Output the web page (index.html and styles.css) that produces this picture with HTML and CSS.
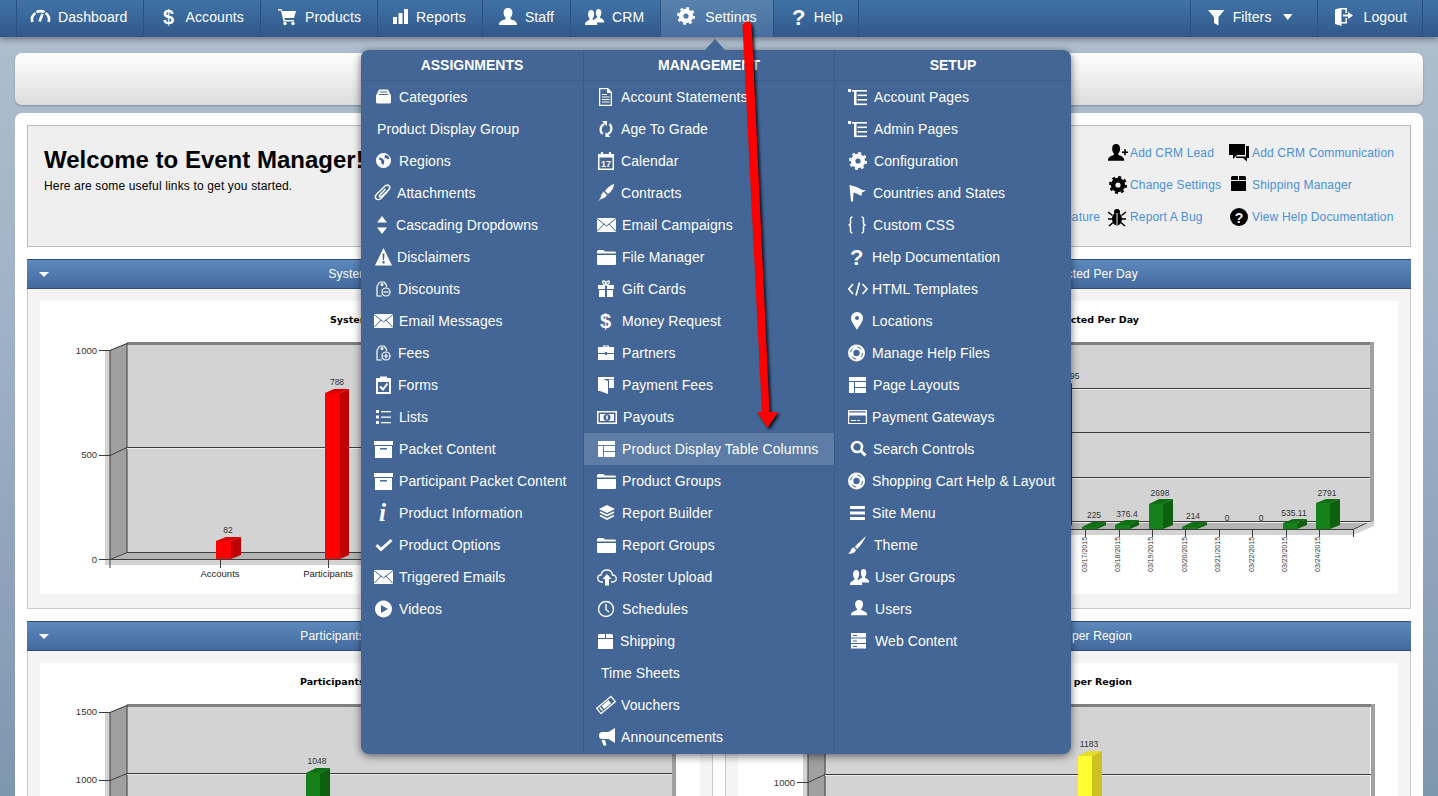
FILE: index.html
```html
<!DOCTYPE html>
<html lang="en">
<head>
<meta charset="utf-8">
<title>Event Manager</title>
<link rel="stylesheet" href="styles.css">
</head>
<body>
<svg class="sprite" width="0" height="0" aria-hidden="true"><defs>
<g id="gauge" fill="none" stroke="currentColor" stroke-width="2.6"><path d="M1.3 14A8.2 8.2 0 0 1 4.500 5M5.500 4.200A8.2 8.2 0 0 1 13.500 4.200M14.500 5A8.2 8.2 0 0 1 17.7 14"/><path d="M8.500 13.500 11.500 6"/></g>
<text id="dollar" class="gb" y="16">$</text>
<text id="qmark" class="gq" y="16.500">?</text>
<path id="cart" d="M0 1h3.500l.6 2H18l-2 7H6.400l.5 2H16v1.500H5.500L3 2.500H0z"/>
<g id="cartw"><use href="#cart"/><circle cx="7" cy="15.500" r="1.700"/><circle cx="15" cy="15.500" r="1.700"/></g>
<g id="bars"><rect y="9" width="4" height="7"/><rect x="5.500" y="5" width="4" height="11"/><rect x="11" y="1" width="4" height="15"/></g>
<path id="person" d="M9 0c3 0 4.400 2 4.400 4.800 0 2-.8 4-2 5V11c1 .8 6.600 1.800 6.600 5v1H0v-1c0-3.200 5.600-4.200 6.600-5V9.800c-1.200-1-2-3-2-5C4.600 2 6 0 9 0z"/>
<g id="users"><use href="#person" transform="translate(8 1) scale(.62 .8)"/><use href="#person" transform="translate(0 2) scale(.68 .88)"/></g>
<g id="gear" fill="none" stroke="currentColor"><circle cx="9" cy="9" r="4.900" stroke-width="4.600"/><circle cx="9" cy="9" r="7.900" stroke-width="2.200" stroke-dasharray="3 3.200"/></g>
<path id="filter" d="M0 2h16.500L10.500 9v8.500L6 15V9z"/>
<path id="caret" d="M0 6h9.500L4.750 12z"/>
<g id="logout"><path d="M0 1.500 5 0h7v5h-1.500V1.500h-4V14h4v-4H12v5.500H6.500V18L0 16z"/><path d="M8 6.500h5V4l5 3.500-5 3.500V8.500H8z"/></g>
<path id="tray" fill-rule="evenodd" d="M3 1.500h9l3 6v7l-1 1H1l-1-1v-7zM3.800 3.500v1h7.400v-1zM3 6v1h9V6z"/>
<path id="globe" fill-rule="evenodd" d="M7.500 1.500a7.500 7.500 0 1 0 .01 0zM9 3.500l3 .5 1.500 3-2 1-1-1.500-2 .5zM3 6l3.500 1 2 2.500-1 4-2-1.500-.5-3L3 8z"/>
<path id="clip" fill="none" stroke="currentColor" stroke-width="1.400" d="M13 7 6 14.500c-1.500 1.500-4 1.500-5 .3s-.8-3 .6-4.500L10 2c1.200-1.200 3-1.200 4-.2s1 2.700-.2 4L6.500 12.500c-.8.8-1.800.6-2 .2s-.2-1 .4-1.700L10.500 5"/>
<path id="updown" d="M5 0l5 6.500H0zM0 11.500h10L5 18z"/>
<path id="warn" fill-rule="evenodd" d="M8.500 0 17 17.500H0zM7.500 5.500l.4 6.500h1.200l.4-6.500zM7.500 13v2.500h2V13z"/>
<g id="bagminus" fill="none" stroke="currentColor" stroke-width="1.200"><path d="M5 2h4l2.500 3v2M4.500 2 2 6.500V16h5"/><circle cx="7" cy="4.500" r=".9"/><circle cx="11" cy="12" r="4"/><path d="M8.500 12h5"/></g>
<g id="bagplus" fill="none" stroke="currentColor" stroke-width="1.200"><path d="M5 2h4l2.500 3v2M4.500 2 2 6.500V16h5"/><circle cx="7" cy="4.500" r=".9"/><circle cx="11" cy="12" r="4"/><path d="M8.500 12h5M11 9.500v5"/></g>
<g id="mail"><rect y="2" width="19" height="14"/><path fill="none" stroke="#436696" d="M0 2.500 9.500 10 19 2.500M0 15.500 7 8M19 15.500 12 8"/></g>
<g id="clipb"><path fill-rule="evenodd" d="M0 2h4V.5h7V2h4v16H0zM2 6v10h11V6z"/><path fill="none" stroke="currentColor" stroke-width="2" d="M4 10.500l3 3 4.500-6"/></g>
<g id="lists"><rect y="2" width="3" height="3"/><rect y="7.500" width="3" height="3"/><rect y="13" width="3" height="3"/><rect x="5" y="3" width="10" height="1.300"/><rect x="5" y="8.500" width="10" height="1.300"/><rect x="5" y="14" width="10" height="1.300"/></g>
<path id="archive" fill-rule="evenodd" d="M0 1h19v4H0zM1 6h17v12H1zM6 8v1.500h7V8z"/>
<text id="info" class="gi" y="17">i</text>
<path id="check" fill="none" stroke="currentColor" stroke-width="3" d="M1.500 9l4.500 4.500L16.500 4"/>
<path id="play" fill-rule="evenodd" d="M8.500.5a8.500 8.500 0 1 0 .01 0zM6 5v8l7-4z"/>
<path id="doc" fill-rule="evenodd" d="M1 0h9l4 4v14H1zM2.300 1.300v15.400h10.400V5H9V1.300zM4 6h5v1H4zM4 8.500h7.500v1H4zM4 11h7.500v1H4zM4 13.500h7.500v1H4z"/>
<g id="sync"><path fill="none" stroke="currentColor" stroke-width="2.200" d="M5.500 4C1 5.500.5 11 3.500 14M8.500 14C13 12.500 13.500 7 10.500 4"/><path d="M3 1h5v5zM11.500 17h-5v-5z"/></g>
<g id="cal"><path fill-rule="evenodd" d="M0 2h3V0h2v2h6V0h2v2h3v16H0zM1.500 5.500v11h13v-11z"/><text class="gs" x="3" y="15">17</text></g>
<g id="pen"><path d="M16 0c0 4-3 8-6 10L7 7c2-3 6-6 9-7z"/><path d="M5.500 7.500 9 11l-2 2.500-4 1.500-3 2.500L2.500 14l1-3.500z"/></g>
<path id="folder" d="M0 3.500Q0 2 1.500 2h5L8 3.500h10Q19 3.500 19 5v.5H0zM0 7h19v9q0 1-1 1H1q-1 0-1-1z"/>
<g id="gift"><path d="M0 5h7v4H0zM9 5h7v4H9zM1 10h6v7H1zM9 10h6v7H9z"/><path fill="none" stroke="currentColor" stroke-width="1.300" d="M8 5C5 5 3.500 1 5.500 1 7 1 8 3 8 5c0-2 1-4 2.500-4C12.500 1 11 5 8 5"/></g>
<path id="brief" fill-rule="evenodd" d="M5 3V1.500h6V3h5v6H9V8H7v1H0V3zM6.500 3h3v-.5h-3zM0 10h7v1h2v-1h7v6H0z"/>
<path id="wallet" d="M0 1h16v2H6v.5L10 5v13L2 15H0zM11 3.500h5V12h-5z"/>
<g id="cash"><path fill-rule="evenodd" d="M0 3h20v13H0zM1.500 4.500v10h17v-10z"/><rect x="3" y="6" width="14" height="7"/><circle cx="10" cy="9.500" r="3.500" fill="#436696"/><rect x="9.200" y="7.500" width="1.600" height="4"/></g>
<g id="table"><rect y="1" width="17" height="4"/><rect y="6" width="5" height="11"/><rect x="6" y="6" width="11" height="5"/><rect x="6" y="12" width="11" height="5"/></g>
<g id="layers"><path d="M8 1l8 4-8 4-8-4z"/><path fill="none" stroke="currentColor" stroke-width="1.600" d="M1 8l7 3.500L15 8M1 11.500 8 15l7-3.500"/></g>
<g id="cloud"><path fill="none" stroke="currentColor" stroke-width="1.300" d="M6 14H4.500C2 14 .7 12 .7 10.300.7 8.500 2 7 4 7c.5-3 3-5 6-5 3 0 5 2 5.500 5 2 0 3.800 1.500 3.800 3.600S18 14 15.500 14H14"/><path d="M10 6l4.500 5H12v6.500H8V11H5.500z"/></g>
<g id="clock" fill="none" stroke="currentColor" stroke-width="1.400"><circle cx="8" cy="9" r="7.500"/><path d="M8 4v5.500l3 2.500"/></g>
<path id="box" d="M0 3.500Q0 2 1.500 2H7v4H0zM8 2h5.500Q15 2 15 3.500V6H8zM0 7h15v10H0z"/>
<g id="voucher" transform="rotate(-40 9 9)"><path fill-rule="evenodd" d="M-1 5h20v8H-1zM.3 6.300v5.400h17.400V6.300z"/><path d="M5 7h9v4H5z"/><path d="M2 7h1.500v4H2z"/></g>
<path id="mega" d="M18 0v15l-6.500-4H5.500A3.500 3.500 0 0 1 2 7.500 3.500 3.500 0 0 1 5.500 4h6zM4.500 12h3.500l1.500 5.500h-3z"/>
<g id="elist"><rect y="1" width="3" height="3"/><rect x="4" y="2" width="15" height="1.600"/><rect x="6" y="2" width="2.500" height="15"/><rect x="6" y="15.500" width="13" height="1.600"/><rect x="9.500" y="6.500" width="9.500" height="1.600"/><rect x="9.500" y="11" width="9.500" height="1.600"/></g>
<path id="flag" d="M.5 1l7 2 6 3 3.500.5-4 2-.5 3.500-5-2.500-3-1L4 17.500H2z"/>
<path id="braces" fill="none" stroke="currentColor" stroke-width="1.500" d="M4.500 1C2.500 1 2.500 2 2.500 4v3c0 1-1 2-2 2 1 0 2 1 2 2v3c0 2 0 3 2 3M13.500 1c2 0 2 1 2 3v3c0 1 1 2 2 2-1 0-2 1-2 2v3c0 2 0 3-2 3"/>
<path id="code" fill="none" stroke="currentColor" stroke-width="1.600" d="M5 4 .8 9 5 14M14.500 4 19 9l-4.500 5M11.500 2.500 8 15.500"/>
<path id="pin" fill-rule="evenodd" d="M6 0a6 6 0 0 1 6 6c0 4-4 8-6 12C4 14 0 10 0 6a6 6 0 0 1 6-6zM6 4a2 2 0 1 0 .01 0z"/>
<g id="buoy"><circle cx="8.500" cy="9" r="8.500"/><circle cx="8.500" cy="9" r="3.200" fill="#436696"/><circle cx="8.500" cy="9" r="6" fill="none" stroke="#436696" stroke-width="1" stroke-dasharray="4.500 5"/></g>
<g id="card"><path fill-rule="evenodd" d="M0 2h19v14H0zM1.200 7.500V15h16.600V7.500zM1.200 3.200v1.400h16.600V3.200z"/><rect x="3" y="12" width="5" height="1"/><rect x="9" y="12" width="3" height="1"/></g>
<g id="search" fill="none" stroke="currentColor"><circle cx="7" cy="7" r="5" stroke-width="2.600"/><path stroke-width="3" d="M10.500 10.500l5 5"/></g>
<g id="menu"><rect y="2" width="15" height="3"/><rect y="7.500" width="15" height="3"/><rect y="13" width="15" height="3"/></g>
<g id="brush"><path d="M18 0c-4 4-9 8-11 11l2 2c3-3 7-8 9-13z"/><path d="M6 11.500c-2 0-3 2-3.500 3.500-.2.8-1.500 2-2.500 2.500 3 .5 7 0 8-3.500z"/></g>
<g id="server"><rect y="1" width="15" height="4.500"/><rect y="6.500" width="15" height="4.500"/><rect y="12" width="15" height="4.500"/><path fill="#436696" d="M2 3h4v1H2zM2 8.500h4v1H2zM2 14h4v1H2z"/></g>
<g id="personadd"><use href="#person" transform="scale(.9 .98)"/><path d="M14 7.500h2.200V5.300h1.600v2.200H20v1.600h-2.200v2.200h-1.600V9.100H14z"/></g>
<g id="bubbles"><path d="M0 0h16v11H8l-4 4v-4H0z"/><path d="M17 2h3v12h-2v3.500L14 14H7v-1.500h10z"/></g>
<g id="bug"><ellipse cx="9" cy="11" rx="5" ry="6.500"/><circle cx="9" cy="4" r="3"/><path fill="none" stroke="currentColor" stroke-width="1.500" d="M0 4l4.500 3.500M18 4l-4.500 3.500M0 11h5M18 11h-5M1 18l4-3.500M17 18l-4-3.500"/><path stroke="#efefef" d="M9 5v12"/></g>
<g id="helpc"><circle cx="9" cy="9" r="9"/><text class="gh" x="9" y="14.500">?</text></g>
</defs></svg>

<nav class="nav">
  <a class="nav-item" href="#"><svg class="ico" width="27" height="18"><use href="#gauge"/></svg>Dashboard</a>
  <a class="nav-item" href="#"><svg class="ico" width="27" height="18"><use href="#dollar" x="5"/></svg>Accounts</a>
  <a class="nav-item" href="#"><svg class="ico" width="30" height="18"><use href="#cartw" x="3"/></svg>Products</a>
  <a class="nav-item" href="#"><svg class="ico" width="24" height="18"><use href="#bars" x="1"/></svg>Reports</a>
  <a class="nav-item" href="#"><svg class="ico" width="28" height="18"><use href="#person" x="2"/></svg>Staff</a>
  <a class="nav-item" href="#"><svg class="ico" width="27" height="18"><use href="#users"/></svg>CRM</a>
  <a class="nav-item is-active" href="#"><svg class="ico" width="30" height="18"><use href="#gear" x="2" y="-1"/></svg>Settings</a>
  <a class="nav-item is-last" href="#"><svg class="ico" width="26" height="18"><use href="#qmark" x="4"/></svg>Help</a>
  <div class="nav-right">
    <a class="nav-item" href="#"><svg class="ico" width="28" height="18"><use href="#filter" x="3"/></svg>Filters<svg class="ico" width="29" height="18"><use href="#caret" x="11"/></svg></a>
    <a class="nav-item is-last" href="#"><svg class="ico" width="32" height="18"><use href="#logout" x="3"/></svg>Logout</a>
  </div>
</nav>

<div class="toolbar"></div>

<main class="main">
  <section class="welcome">
    <div class="welcome-text">
      <h1>Welcome to Event Manager!</h1>
      <p>Here are some useful links to get you started.</p>
    </div>
    <div class="quick">
      <span></span>
      <a href="#"><svg class="ico dark" width="22" height="18"><use href="#personadd"/></svg>Add CRM Lead</a>
      <a href="#"><svg class="ico dark" width="23" height="18"><use href="#bubbles"/></svg>Add CRM Communication</a>
      <span></span>
      <a href="#"><svg class="ico dark" width="22" height="18"><use href="#gear" x="1"/></svg>Change Settings</a>
      <a href="#"><svg class="ico dark" width="23" height="18"><use href="#box" x="2" y="-2"/></svg>Shipping Manager</a>
      <a class="end" href="#">Request A Feature</a>
      <a href="#"><svg class="ico dark" width="22" height="18"><use href="#bug"/></svg>Report A Bug</a>
      <a href="#"><svg class="ico dark" width="23" height="18"><use href="#helpc" x="1"/></svg>View Help Documentation</a>
    </div>
  </section>

  <div class="charts">
    <section class="panel">
      <header class="panel-head"><span class="tri"></span><span>System Activity</span><span></span></header>
      <div class="panel-body">
        <svg class="chart" width="660" height="293">
          <rect class="sh" x="65" y="49" width="5" height="215"/><rect class="sh" x="65" y="258" width="550" height="6"/>
          <rect class="back" x="87" y="42" width="545" height="209"/>
          <rect class="edge" x="87" y="41" width="549" height="3"/><rect class="rw" x="632" y="41" width="4" height="210"/>
          <polygon class="wall" points="70,49 87,42 87,251 70,258"/>
          <polygon class="floor" points="70,258 615,258 632,251 87,251"/>
          <path class="ax" d="M59 49.500H70L87 42.500M59 154.500H70L87 146.500H632M59 258.500H70L87 251.500H632M70 258.500H615M70 49V267M87 42V251M180.500 258V267M288.500 258V267M615.500 258V267"/>
          <path class="hl" d="M87 147.500H632"/>
          <text class="t-end" x="57" y="53">1000</text><text class="t-end" x="57" y="157">500</text><text class="t-end" x="57" y="262">0</text>
          <polygon class="r-f" points="176,240 191,240 191,258 176,258"/><polygon class="r-s" points="191,240 201,236 201,254 191,258"/><polygon class="r-t" points="176,240 186,236 201,236 191,240"/>
          <polygon class="r-f" points="285,92 300,92 300,258 285,258"/><polygon class="r-s" points="300,92 309,88 309,254 300,258"/><polygon class="r-t" points="285,92 294,88 309,88 300,92"/>
          <text class="t-v" x="188" y="232">82</text><text class="t-v" x="297" y="84">788</text>
          <text class="t-x" x="180" y="276">Accounts</text><text class="t-x" x="288" y="276">Participants</text>
          <text class="t-title" x="290" y="22">System</text>
        </svg>
      </div>
    </section>
    <section class="panel">
      <header class="panel-head"><span class="tri"></span><span>Money Collected Per Day</span><span></span></header>
      <div class="panel-body">
        <svg class="chart" width="660" height="293">
          <rect class="sh" x="65" y="49" width="5" height="185"/><rect class="sh" x="65" y="228" width="550" height="6"/>
          <rect class="back" x="87" y="42" width="545" height="179"/>
          <rect class="edge" x="87" y="41" width="549" height="3"/><rect class="rw" x="632" y="41" width="4" height="184"/>
          <polygon class="wall" points="70,49 87,42 87,220 70,228"/>
          <polygon class="sh" points="615,228 636,220 636,225 615,234"/>
          <polygon class="floor" points="70,228 615,228 632,220 87,220"/>
          <path class="ax" d="M87 87.500H632M87 131.500H632M87 176.500H632M87 220.500H632M70 228.500H615L632 220.500M70 49V236M87 42V220M347.500 228V236M381.500 228V236M414.500 228V236M447.500 228V236M481.500 228V236M514.500 228V236M548.500 228V236M581.500 228V236M615.500 228V236"/>
          <path class="hl" d="M87 88.500H632M87 177.500H632M87 221.500H632"/>
          <polygon class="g-f" points="310,86 325,86 325,228 310,228"/><polygon class="g-s" points="325,86 334,82 334,224 325,228"/>
          <polygon class="g-f" points="344,226 359,226 359,228 344,228"/><polygon class="g-t" points="344,226 354,221 368,221 359,226"/><polygon class="g-s" points="359,226 368,221 368,224 359,228"/>
          <polygon class="g-f" points="377,224 392,224 392,228 377,228"/><polygon class="g-t" points="377,224 387,219 401,219 392,224"/><polygon class="g-s" points="392,224 401,219 401,224 392,228"/>
          <polygon class="g-f" points="411,203 425,203 425,228 411,228"/><polygon class="g-t" points="411,203 421,198 435,198 425,203"/><polygon class="g-s" points="425,203 435,198 435,224 425,228"/>
          <polygon class="g-f" points="444,226 459,226 459,228 444,228"/><polygon class="g-t" points="444,226 454,221 469,221 459,226"/><polygon class="g-s" points="459,226 469,221 469,224 459,228"/>
          <polygon class="g-f" points="545,222 559,222 559,228 545,228"/><polygon class="g-t" points="545,222 555,218 569,218 559,222"/><polygon class="g-s" points="559,222 569,218 569,224 559,228"/>
          <polygon class="g-f" points="578,202 592,202 592,228 578,228"/><polygon class="g-t" points="578,202 588,198 602,198 592,202"/><polygon class="g-s" points="592,202 602,198 602,224 592,228"/>
          <text class="t-v" x="332" y="78">3495</text><text class="t-v" x="356" y="217">225</text><text class="t-v" x="389" y="216">376.4</text><text class="t-v" x="422" y="195">2698</text><text class="t-v" x="455" y="218">214</text><text class="t-v" x="489" y="220">0</text><text class="t-v" x="523" y="220">0</text><text class="t-v" x="556" y="215">535.11</text><text class="t-v" x="589" y="195">2791</text>
          <text class="t-d" transform="translate(349 271) rotate(-90)">03/17/2015</text><text class="t-d" transform="translate(382 271) rotate(-90)">03/18/2015</text><text class="t-d" transform="translate(415 271) rotate(-90)">03/19/2015</text><text class="t-d" transform="translate(449 271) rotate(-90)">03/20/2015</text><text class="t-d" transform="translate(482 271) rotate(-90)">03/21/2015</text><text class="t-d" transform="translate(516 271) rotate(-90)">03/22/2015</text><text class="t-d" transform="translate(549 271) rotate(-90)">03/23/2015</text><text class="t-d" transform="translate(582 271) rotate(-90)">03/24/2015</text>
          <text class="t-title t-title-end" x="401" y="22">Money Collected Per Day</text>
        </svg>
      </div>
    </section>
    <section class="panel">
      <header class="panel-head"><span class="tri"></span><span>Participants per Category</span><span></span></header>
      <div class="panel-body">
        <svg class="chart" width="660" height="293">
          <rect class="sh" x="65" y="49" width="5" height="215"/>
          <rect class="back" x="87" y="42" width="545" height="209"/>
          <rect class="edge" x="87" y="41" width="549" height="3"/><rect class="rw" x="632" y="41" width="4" height="210"/>
          <polygon class="wall" points="70,49 87,42 87,251 70,258"/>
          <path class="ax" d="M59 49.500H70L87 42.500M59 117.500H70L87 110.500H632M70 49V267M87 42V251"/>
          <path class="hl" d="M87 111.500H632"/>
          <text class="t-end" x="57" y="52">1500</text><text class="t-end" x="57" y="120">1000</text>
          <polygon class="g-f" points="266,110 280,110 280,258 266,258"/><polygon class="g-s" points="280,110 290,105 290,254 280,258"/><polygon class="g-t" points="266,110 276,105 290,105 280,110"/>
          <text class="t-v" x="277" y="101">1048</text>
          <text class="t-title" x="260" y="22">Participants</text>
        </svg>
      </div>
    </section>
    <section class="panel">
      <header class="panel-head"><span class="tri"></span><span>Participants per Region</span><span></span></header>
      <div class="panel-body">
        <svg class="chart" width="660" height="293">
          <rect class="sh" x="65" y="49" width="5" height="215"/>
          <rect class="back" x="87" y="42" width="545" height="209"/>
          <rect class="edge" x="87" y="41" width="549" height="3"/><rect class="rw" x="633" y="41" width="4" height="210"/>
          <polygon class="wall" points="70,49 87,42 87,251 70,258"/>
          <path class="ax" d="M59 49.500H70L87 42.500M59 119.500H70L87 111.500H633M70 49V267M87 42V251"/>
          <path class="hl" d="M87 112.500H633"/>
          <text class="t-end" x="57" y="52">1500</text><text class="t-end" x="57" y="123">1000</text>
          <polygon class="y-f" points="340,93 354,93 354,258 340,258"/><polygon class="y-s" points="354,93 364,88 364,254 354,258"/><polygon class="y-t" points="340,93 350,88 364,88 354,93"/>
          <text class="t-v" x="351" y="84">1183</text>
          <text class="t-title t-title-end" x="394" y="22">Participants per Region</text>
        </svg>
      </div>
    </section>
  </div>
</main>

<div class="mega">
  <div class="mega-col col-a">
    <h2>ASSIGNMENTS</h2>
    <a href="#"><svg class="ico" width="25" height="18"><use href="#tray" x="2"/></svg>Categories</a>
    <a class="plain" href="#">Product Display Group</a>
    <a href="#"><svg class="ico" width="25" height="18"><use href="#globe" x="2" y="-.5"/></svg>Regions</a>
    <a href="#"><svg class="ico" width="23" height="18"><use href="#clip" x="1"/></svg>Attachments</a>
    <a href="#"><svg class="ico" width="22" height="18"><use href="#updown" x="3"/></svg>Cascading Dropdowns</a>
    <a href="#"><svg class="ico" width="23" height="18"><use href="#warn" x="1"/></svg>Disclaimers</a>
    <a href="#"><svg class="ico" width="24" height="18"><use href="#bagminus" x="1"/></svg>Discounts</a>
    <a href="#"><svg class="ico" width="25" height="18"><use href="#mail"/></svg>Email Messages</a>
    <a href="#"><svg class="ico" width="24" height="18"><use href="#bagplus" x="1"/></svg>Fees</a>
    <a href="#"><svg class="ico" width="24" height="18"><use href="#clipb" x="2"/></svg>Forms</a>
    <a href="#"><svg class="ico" width="25" height="18"><use href="#lists" x="2"/></svg>Lists</a>
    <a href="#"><svg class="ico" width="25" height="18"><use href="#archive"/></svg>Packet Content</a>
    <a href="#"><svg class="ico" width="25" height="18"><use href="#archive"/></svg>Participant Packet Content</a>
    <a href="#"><svg class="ico" width="25" height="18"><use href="#info" x="5"/></svg>Product Information</a>
    <a href="#"><svg class="ico" width="25" height="18"><use href="#check" x="1"/></svg>Product Options</a>
    <a href="#"><svg class="ico" width="25" height="18"><use href="#mail"/></svg>Triggered Emails</a>
    <a href="#"><svg class="ico" width="25" height="18"><use href="#play" x="1"/></svg>Videos</a>
  </div>
  <div class="mega-col col-b">
    <h2>MANAGEMENT</h2>
    <a href="#"><svg class="ico" width="24" height="18"><use href="#doc" x="1"/></svg>Account Statements</a>
    <a href="#"><svg class="ico" width="24" height="18"><use href="#sync" x="2"/></svg>Age To Grade</a>
    <a href="#"><svg class="ico" width="24" height="18"><use href="#cal" x="1"/></svg>Calendar</a>
    <a href="#"><svg class="ico" width="24" height="18"><use href="#pen" x="1"/></svg>Contracts</a>
    <a href="#"><svg class="ico" width="25" height="18"><use href="#mail"/></svg>Email Campaigns</a>
    <a href="#"><svg class="ico" width="25" height="18"><use href="#folder"/></svg>File Manager</a>
    <a href="#"><svg class="ico" width="25" height="18"><use href="#gift" x="1"/></svg>Gift Cards</a>
    <a href="#"><svg class="ico" width="25" height="18"><use href="#dollar" x="3"/></svg>Money Request</a>
    <a href="#"><svg class="ico" width="25" height="18"><use href="#brief" x="1"/></svg>Partners</a>
    <a href="#"><svg class="ico" width="25" height="18"><use href="#wallet" x="1"/></svg>Payment Fees</a>
    <a href="#"><svg class="ico" width="26" height="18"><use href="#cash"/></svg>Payouts</a>
    <a class="is-hover" href="#"><svg class="ico" width="25" height="18"><use href="#table" x="1"/></svg>Product Display Table Columns</a>
    <a href="#"><svg class="ico" width="25" height="18"><use href="#folder"/></svg>Product Groups</a>
    <a href="#"><svg class="ico" width="25" height="18"><use href="#layers" x="2"/></svg>Report Builder</a>
    <a href="#"><svg class="ico" width="25" height="18"><use href="#folder"/></svg>Report Groups</a>
    <a href="#"><svg class="ico" width="25" height="18"><use href="#cloud"/></svg>Roster Upload</a>
    <a href="#"><svg class="ico" width="25" height="18"><use href="#clock" x="1"/></svg>Schedules</a>
    <a href="#"><svg class="ico" width="23" height="18"><use href="#box" x="1"/></svg>Shipping</a>
    <a class="plain-b" href="#">Time Sheets</a>
    <a href="#"><svg class="ico" width="24" height="18"><use href="#voucher"/></svg>Vouchers</a>
    <a href="#"><svg class="ico" width="24" height="18"><use href="#mega"/></svg>Announcements</a>
  </div>
  <div class="mega-col col-c">
    <h2>SETUP</h2>
    <a href="#"><svg class="ico" width="26" height="18"><use href="#elist"/></svg>Account Pages</a>
    <a href="#"><svg class="ico" width="26" height="18"><use href="#elist"/></svg>Admin Pages</a>
    <a href="#"><svg class="ico" width="26" height="18"><use href="#gear" x="1"/></svg>Configuration</a>
    <a href="#"><svg class="ico" width="25" height="18"><use href="#flag" x="1"/></svg>Countries and States</a>
    <a href="#"><svg class="ico" width="25" height="18"><use href="#braces"/></svg>Custom CSS</a>
    <a href="#"><svg class="ico" width="24" height="18"><use href="#qmark" x="2"/></svg>Help Documentation</a>
    <a href="#"><svg class="ico" width="24" height="18"><use href="#code"/></svg>HTML Templates</a>
    <a href="#"><svg class="ico" width="24" height="18"><use href="#pin" x="3"/></svg>Locations</a>
    <a href="#"><svg class="ico" width="24" height="18"><use href="#buoy"/></svg>Manage Help Files</a>
    <a href="#"><svg class="ico" width="25" height="18"><use href="#table" x="1"/></svg>Page Layouts</a>
    <a href="#"><svg class="ico" width="24" height="18"><use href="#card"/></svg>Payment Gateways</a>
    <a href="#"><svg class="ico" width="25" height="18"><use href="#search" x="2"/></svg>Search Controls</a>
    <a href="#"><svg class="ico" width="24" height="18"><use href="#buoy"/></svg>Shopping Cart Help &amp; Layout</a>
    <a href="#"><svg class="ico" width="24" height="18"><use href="#menu" x="2"/></svg>Site Menu</a>
    <a href="#"><svg class="ico" width="26" height="18"><use href="#brush"/></svg>Theme</a>
    <a href="#"><svg class="ico" width="27" height="18"><use href="#users" x="2"/></svg>User Groups</a>
    <a href="#"><svg class="ico" width="27" height="18"><use href="#person" transform="translate(3 0) scale(.9)"/></svg>Users</a>
    <a href="#"><svg class="ico" width="27" height="18"><use href="#server" x="3"/></svg>Web Content</a>
  </div>
</div>

<svg class="arrow" width="1438" height="796" aria-hidden="true">
  <circle cx="747" cy="26" r="4.500"/>
  <polygon points="742.600,26 751.600,26 769.500,412 778,412 767.500,428 757,412 762,412"/>
</svg>
</body>
</html>
```

FILE: styles.css
```css
* { box-sizing: border-box; }
html, body { margin: 0; height: 796px; overflow: hidden; }
body {
  position: relative;
  font-family: "Liberation Sans", Arial, sans-serif;
  font-size: 14px;
  color: #000;
  background: linear-gradient(#b0bfcd, #a0b2c7 40%, #7f96b0);
}
a { text-decoration: none; color: inherit; }
.sprite { display: block; }
.sprite .gb { font: 700 20px "Liberation Sans", sans-serif; }
.sprite .gq { font: 700 22px "Liberation Sans", sans-serif; }
.sprite .gi { font: italic 700 25px "Liberation Serif", serif; }
.sprite .gs { font: 700 9px "Liberation Sans", sans-serif; }
.sprite .gh { font: 700 14px "Liberation Sans", sans-serif; fill: #efefef; text-anchor: middle; }

.ico { flex: none; color: #fff; fill: currentColor; overflow: visible; }
.ico.dark { color: #000; }

/* Top bar */
.nav {
  display: flex;
  height: 37px;
  padding: 0 15px 0 16px;
  background: linear-gradient(#4073a8, #32588a);
  box-shadow: 0 2px 6px rgba(0, 0, 0, .4);
  color: #fff;
  letter-spacing: .11px;
}
.nav-item {
  display: flex;
  align-items: center;
  padding: 0 16px 3px 14px;
  border-left: 1px solid #2c5283;
}
.nav-item.is-last { border-right: 1px solid #2c5283; padding-right: 15px; }
.nav-item.is-active { background: linear-gradient(#5a82ae, #476e9f); }
.nav-right { display: flex; margin-left: auto; }

/* Blank toolbar */
.toolbar {
  height: 52px;
  margin: 16px 15px 0;
  border-radius: 7px;
  background: linear-gradient(#fff, #dcdcdc);
  box-shadow: 0 1px 2px rgba(0, 0, 0, .25);
}

/* Main card */
.main {
  margin: 8px 15px 0;
  padding: 12px;
  background: #fff;
  border-radius: 7px 7px 0 0;
}
.welcome {
  display: flex;
  justify-content: space-between;
  height: 122px;
  background: #efefef;
  border: 1px solid #bbb;
}
.welcome-text { padding: 20px 0 0 16px; }
.welcome h1 { margin: 0; font-size: 24px; line-height: 28px; font-weight: 700; }
.welcome p { margin: 5px 0 0; font-size: 12px; line-height: 14px; letter-spacing: .15px; }
.quick {
  display: grid;
  grid-template-columns: auto 113px 165px;
  grid-auto-rows: 32px;
  column-gap: 8px;
  padding: 11px 16px 0 0;
  font-size: 12px;
  letter-spacing: .16px;
  color: #4a90d9;
}
.quick a { display: flex; align-items: center; white-space: nowrap; }
.quick a.end { justify-content: flex-end; }

.charts {
  display: grid;
  grid-template-columns: 686px 686px;
  gap: 12px;
  margin-top: 12px;
}
.panel-head {
  display: grid;
  grid-template-columns: 1fr auto 1fr;
  align-items: center;
  height: 30px;
  padding: 0 12px;
  font-size: 12px;
  letter-spacing: .16px;
  color: #fff;
  background: linear-gradient(#5d8abd, #44699f);
  border-top: 1px solid #2f4d75;
  border-bottom: 1px solid #2f4d75;
}
.tri {
  width: 0;
  border: 5px solid transparent;
  border-top: 5px solid #fff;
  border-bottom: 0;
}
.panel-body {
  padding: 12px 12px 14px;
  background: #f4f4f4;
  border: 1px solid #ccc;
  border-top: 0;
}
.chart { display: block; background: #fff; }
.chart text { font-family: "Liberation Sans", sans-serif; fill: #333; }
.sh { fill: #d3d3d3; }
.back { fill: #d3d3d3; }
.edge { fill: #808080; }
.rw { fill: #a0a0a0; }
.wall { fill: #a0a0a0; }
.floor { fill: #b4b4b4; }
.ax { fill: none; stroke: #3c3c3c; stroke-width: 1; }
.hl { fill: none; stroke: #eee; stroke-width: 1; }
.chart .t-end { font-size: 9.5px; text-anchor: end; }
.chart .t-v { font-size: 8.5px; text-anchor: middle; }
.chart .t-x { font-size: 9.5px; text-anchor: middle; fill: #222; }
.chart .t-d { font-size: 7px; text-anchor: start; }
.chart .t-title { font: 700 9.5px "DejaVu Sans", sans-serif; fill: #000; }
.chart .t-title-end { text-anchor: end; }
.r-f { fill: #f00; } .r-s { fill: #bf0000; } .r-t { fill: #d80000; }
.g-f { fill: #16801a; } .g-s { fill: #0e600e; } .g-t { fill: #117015; }
.y-f { fill: #ffff33; } .y-s { fill: #cbc220; } .y-t { fill: #e4dc28; }

/* Settings mega menu */
.mega {
  position: absolute;
  top: 50px;
  left: 361px;
  display: grid;
  grid-template-columns: 222px 251px 237px;
  height: 704px;
  background: #436696;
  border-radius: 8px;
  box-shadow: 0 2px 9px rgba(0, 0, 0, .55);
  color: #fff;
}
.mega::before {
  content: "";
  position: absolute;
  top: -11px;
  left: 344px;
  border: 10px solid transparent;
  border-top: 0;
  border-bottom: 11px solid #436696;
}
.mega-col { display: flex; flex-direction: column; }
.col-b, .col-c { border-left: 1px solid #3a5c8a; }
.mega h2 {
  margin: 0;
  height: 31px;
  font-size: 14px;
  line-height: 30px;
  font-weight: 700;
  text-align: center;
  border-bottom: 1px solid #3a5c8a;
}
.mega-col a {
  display: flex;
  align-items: center;
  flex: none;
  height: 32px;
  padding-left: 13px;
  white-space: nowrap;
  letter-spacing: .07px;
}
.mega-col a.plain { padding-left: 16px; }
.mega-col a.plain-b { padding-left: 17px; }
.mega-col a.is-hover { background: #5d7ca6; }

/* Annotation arrow drawn on the screenshot */
.arrow {
  position: absolute;
  top: 0;
  left: 0;
  fill: #f00;
  pointer-events: none;
  filter: drop-shadow(2px 2px 1.5px rgba(0, 0, 0, .8));
}
```
